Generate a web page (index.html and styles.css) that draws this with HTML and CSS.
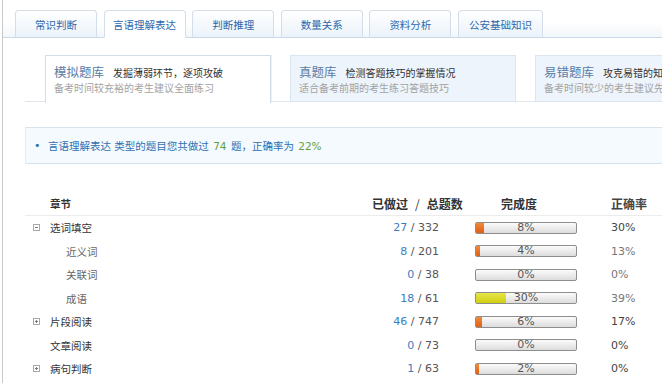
FILE: index.html
```html
<!DOCTYPE html>
<html lang="zh-CN">
<head>
<meta charset="utf-8">
<title>言语理解表达</title>
<link rel="stylesheet" href="styles.css">
</head>
<body>
<div class="page">
  <div class="tabs">
    <div class="tab">常识判断</div>
    <div class="tab active">言语理解表达</div>
    <div class="tab">判断推理</div>
    <div class="tab">数量关系</div>
    <div class="tab">资料分析</div>
    <div class="tab wide">公安基础知识</div>
  </div>
  <div class="content">
    <div class="cards">
      <div class="card active">
        <div class="card-title"><span class="card-name">模拟题库</span><span class="card-desc">发掘薄弱环节，逐项攻破</span></div>
        <div class="card-sub">备考时间较充裕的考生建议全面练习</div>
      </div>
      <div class="card">
        <div class="card-title"><span class="card-name">真题库</span><span class="card-desc">检测答题技巧的掌握情况</span></div>
        <div class="card-sub">适合备考前期的考生练习答题技巧</div>
      </div>
      <div class="card">
        <div class="card-title"><span class="card-name">易错题库</span><span class="card-desc">攻克易错的知识点</span></div>
        <div class="card-sub">备考时间较少的考生建议先练习</div>
      </div>
    </div>
    <div class="info">
      <span class="dot">•</span>
      <span class="info-text">言语理解表达 类型的题目您共做过 <em class="green">74</em> 题，正确率为 <em class="green">22%</em></span>
    </div>
    <div class="table">
      <div class="row head">
        <div class="c-name">章节</div>
        <div class="c-count">已做过<span class="slash">/</span>总题数</div>
        <div class="c-bar">完成度</div>
        <div class="c-acc">正确率</div>
      </div>
      <div class="row">
        <div class="c-name"><svg class="tree" width="7" height="7" viewBox="0 0 7 7"><rect x="0.5" y="0.5" width="6" height="6" fill="#fff" stroke="#a8a8a8"/><path d="M2 3.5H5" stroke="#777"/></svg>选词填空</div>
        <div class="c-count"><span class="done">27</span> / 332</div>
        <div class="c-bar"><div class="bar"><div class="fill" style="width:8%"></div><span>8%</span></div></div>
        <div class="c-acc">30%</div>
      </div>
      <div class="row">
        <div class="c-name child">近义词</div>
        <div class="c-count"><span class="done">8</span> / 201</div>
        <div class="c-bar"><div class="bar"><div class="fill" style="width:4%"></div><span>4%</span></div></div>
        <div class="c-acc light">13%</div>
      </div>
      <div class="row">
        <div class="c-name child">关联词</div>
        <div class="c-count"><span class="done">0</span> / 38</div>
        <div class="c-bar"><div class="bar"><span>0%</span></div></div>
        <div class="c-acc light">0%</div>
      </div>
      <div class="row">
        <div class="c-name child">成语</div>
        <div class="c-count"><span class="done">18</span> / 61</div>
        <div class="c-bar"><div class="bar"><div class="fill yellow" style="width:30%"></div><span>30%</span></div></div>
        <div class="c-acc light">39%</div>
      </div>
      <div class="row">
        <div class="c-name"><svg class="tree" width="7" height="7" viewBox="0 0 7 7"><rect x="0.5" y="0.5" width="6" height="6" fill="#fff" stroke="#a8a8a8"/><path d="M2 3.5H5M3.5 2V5" stroke="#777"/></svg>片段阅读</div>
        <div class="c-count"><span class="done">46</span> / 747</div>
        <div class="c-bar"><div class="bar"><div class="fill" style="width:6%"></div><span>6%</span></div></div>
        <div class="c-acc">17%</div>
      </div>
      <div class="row">
        <div class="c-name">文章阅读</div>
        <div class="c-count"><span class="done">0</span> / 73</div>
        <div class="c-bar"><div class="bar"><span>0%</span></div></div>
        <div class="c-acc">0%</div>
      </div>
      <div class="row">
        <div class="c-name"><svg class="tree" width="7" height="7" viewBox="0 0 7 7"><rect x="0.5" y="0.5" width="6" height="6" fill="#fff" stroke="#a8a8a8"/><path d="M2 3.5H5M3.5 2V5" stroke="#777"/></svg>病句判断</div>
        <div class="c-count"><span class="done">1</span> / 63</div>
        <div class="c-bar"><div class="bar"><div class="fill" style="width:2%"></div><span>2%</span></div></div>
        <div class="c-acc">0%</div>
      </div>
    </div>
  </div>
</div>
</body>
</html>
```

FILE: styles.css
```css
* { box-sizing: border-box; }
html, body { margin: 0; padding: 0; background: #fff; }
body {
  font-family: "DejaVu Sans", "Noto Sans CJK SC", sans-serif;
  font-size: 11px;
  color: #333;
  width: 662px;
  height: 383px;
  overflow: hidden;
}
.page {
  margin-left: 2px;
  border-left: 1px solid #c9c9c9;
  min-height: 383px;
  width: 660px;
  overflow: hidden;
}
.tabs {
  display: flex;
  gap: 6.6px;
  padding: 10px 0 0 12px;
  height: 38px;
  border-bottom: 1px solid #cad9e8;
  background: linear-gradient(#ffffff 0, #ffffff 22px, #f1f6fb 38px);
}
.tab {
  flex: 0 0 82px;
  height: 28px;
  margin-bottom: -1px;
  border: 1px solid #d3deea;
  border-bottom-color: #cad9e8;
  border-radius: 4px 4px 0 0;
  background: linear-gradient(#ffffff, #eaf2fa);
  color: #2d67ad;
  font-size: 10.5px;
  display: flex;
  align-items: center;
  justify-content: center;
}
.tab.active {
  background: #fff;
  border-bottom-color: #fff;
}
.tab.wide { flex-basis: 85px; }
.content {
  padding: 17px 0 0 22px;
}
.cards {
  display: flex;
  gap: 19px;
  padding-left: 20px;
  border-bottom: 1px solid #dfe6ee;
  height: 47px;
}
.card {
  flex: 0 0 226px;
  height: 47px;
  border: 1px solid #dbe5ef;
  background: #eef4fb;
  padding: 7px 0 0 8px;
  white-space: nowrap;
  overflow: hidden;
}
.card.active {
  background: #fff;
  border-color: #d3dde8;
  border-bottom: none;
  height: 48px;
  box-shadow: 1px 0 0 #eef1f4;
}
.card-title {
  height: 17px;
  line-height: 17px;
  display: flex;
  align-items: baseline;
}
.card-name {
  font-family: "Noto Sans CJK SC", sans-serif;
  font-size: 12.5px;
  color: #5b7ca6;
  margin-right: 9px;
}
.card-desc {
  font-family: "Noto Sans CJK SC", sans-serif;
  font-size: 10px;
  color: #333;
}
.card-sub {
  font-family: "Noto Sans CJK SC", sans-serif;
  font-size: 10px;
  line-height: 16px;
  color: #a3a3a3;
}
.info {
  margin-top: 25px;
  height: 37px;
  border-top: 1px solid #d4e3ee;
  border-bottom: 1px solid #d4e3ee;
  border-left: 1px solid #e3edf4;
  background: #f4fafd;
  display: flex;
  align-items: center;
  padding-left: 8px;
  color: #2f70b3;
  font-size: 10.5px;
}
.dot { width: 14px; font-size: 11px; color: #2f70b3; }
.info-text { white-space: nowrap; }
.green { color: #64a03a; font-style: normal; padding: 0 1px; }
.table {
  margin-top: 28px;
}
.row {
  display: grid;
  grid-template-columns: 347px 95px 144px 80px;
  height: 23.5px;
  align-items: center;
}
.row.head {
  height: 24px;
  border-bottom: 1px solid #ececec;
  font-family: "Noto Sans CJK SC", sans-serif;
  font-weight: bold;
  font-size: 12px;
  color: #333;
  align-items: center;
}
.row.head .c-name { padding-left: 25px; }
.row.head .c-count { text-align: left; padding-right: 0; white-space: nowrap; color: #333; }
.row.head .c-bar { padding-left: 34px; }
.slash { padding: 0 7px; font-weight: normal; }
.c-name {
  display: flex;
  align-items: center;
  padding-left: 25px;
  font-size: 10.5px;
  color: #333;
  position: relative;
}
.tree {
  position: absolute;
  left: 8px;
  top: 50%;
  margin-top: -4px;
}
.c-name.child { padding-left: 41px; color: #666; }
.c-count {
  text-align: right;
  padding-right: 28px;
  color: #555;
  white-space: nowrap;
}
.done { color: #3b7dc0; }
.c-bar { padding-left: 8px; }
.bar {
  position: relative;
  width: 102px;
  height: 12px;
  border: 1px solid #8e8e8e;
  border-radius: 2px;
  background: linear-gradient(#fbfbfb, #e9e9e9 60%, #dcdcdc);
  overflow: hidden;
}
.fill {
  position: absolute;
  left: 0;
  top: 0;
  bottom: 0;
  min-width: 3px;
  background: linear-gradient(#f08a3a, #dd6016);
}
.fill.yellow {
  background: linear-gradient(#e6e64a, #cfcf12);
}
.bar span {
  position: absolute;
  inset: 0;
  text-align: center;
  line-height: 10px;
  font-size: 11px;
  color: #555;
}
.c-acc { color: #444; }
.c-acc.light { color: #777; }
```
